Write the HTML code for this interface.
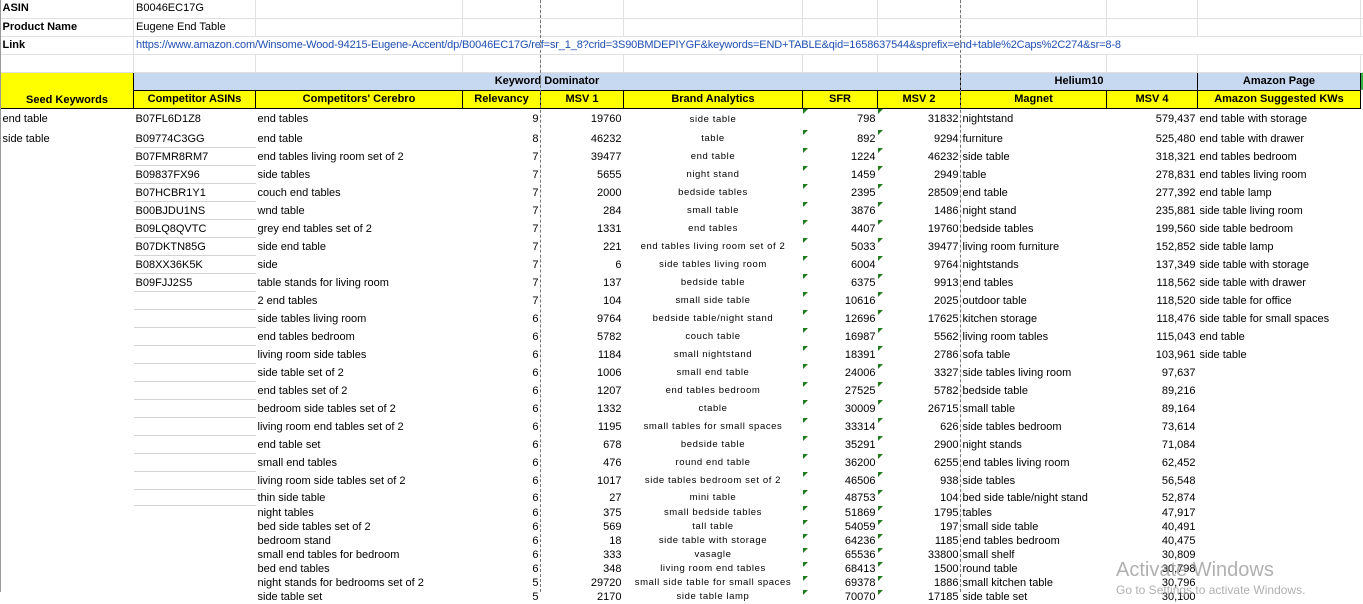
<!DOCTYPE html>
<html><head><meta charset="utf-8"><style>
body{margin:0;width:1363px;height:592px;overflow:hidden;background:#fff;font-family:"Liberation Sans",sans-serif;font-size:11px;color:#000;position:relative}
table{border-collapse:collapse;table-layout:fixed;position:absolute;left:0;top:0}
td{padding:0 2px;white-space:nowrap;overflow:hidden;height:18px;line-height:18px;box-sizing:border-box;border:0}
.t td{border-right:1px solid #e0e0e0;border-bottom:1px solid #e0e0e0;height:18px;line-height:17px}
.b{font-weight:bold}
.r{text-align:right}
.h td{height:18px;line-height:16px}
.y{background:#ffff00;font-weight:bold;text-align:center;border:1px solid #000 !important}
.bl{background:#c6d9f1;font-weight:bold;text-align:center;border:1px solid #000 !important}
.ba{font-size:9.5px;letter-spacing:0.6px;text-align:center}
.g{position:relative}
.g:before{content:"";position:absolute;left:0;top:0;border-top:5px solid #1e7b1e;border-right:5px solid transparent}
.cb{box-shadow:inset 0 -1px 0 #d4d4d4}
tr.f td{height:20px;line-height:21px;padding-top:0}
tr.s td{height:14px;line-height:14px}
tr.q td{height:16px;line-height:16px}
a{color:#1f4fb3;letter-spacing:-0.15px}
</style></head><body>
<table style="width:1363px">
<colgroup><col style="width:133px"><col style="width:122px"><col style="width:207px"><col style="width:78px"><col style="width:83px"><col style="width:179px"><col style="width:75px"><col style="width:83px"><col style="width:146px"><col style="width:91px"><col style="width:163px"><col style="width:3px"></colgroup>
<tbody class="t">
<tr><td class="b">ASIN</td><td>B0046EC17G</td><td></td><td></td><td></td><td></td><td></td><td></td><td></td><td></td><td></td><td></td></tr>
<tr><td class="b">Product Name</td><td>Eugene End Table</td><td></td><td></td><td></td><td></td><td></td><td></td><td></td><td></td><td></td><td></td></tr>
<tr><td class="b">Link</td><td colspan="11" style="overflow:visible"><a>https://www.amazon.com/Winsome-Wood-94215-Eugene-Accent/dp/B0046EC17G/ref=sr_1_8?crid=3S90BMDEPIYGF&amp;keywords=END+TABLE&amp;qid=1658637544&amp;sprefix=end+table%2Caps%2C274&amp;sr=8-8</a></td></tr>
<tr><td></td><td></td><td></td><td></td><td></td><td></td><td></td><td></td><td></td><td></td><td></td><td></td></tr>
</tbody>
<tbody class="h">
<tr><td class="y" rowspan="2" style="vertical-align:bottom">Seed Keywords</td><td class="bl" colspan="7">Keyword Dominator</td><td class="bl" colspan="2">Helium10</td><td class="bl">Amazon Page</td><td style="background:#2fb34a"></td></tr>
<tr><td class="y">Competitor ASINs</td><td class="y">Competitors' Cerebro</td><td class="y">Relevancy</td><td class="y">MSV 1</td><td class="y">Brand Analytics</td><td class="y">SFR</td><td class="y">MSV 2</td><td class="y">Magnet</td><td class="y">MSV 4</td><td class="y">Amazon Suggested KWs</td><td></td></tr>
</tbody>
<tbody>
<tr class="f"><td>end table</td><td>B07FL6D1Z8</td><td>end tables</td><td class="r">9</td><td class="r">19760</td><td class="ba">side table</td><td class="r g">798</td><td class="r g">31832</td><td>nightstand</td><td class="r">579,437</td><td>end table with storage</td><td></td></tr>
<tr><td>side table</td><td class="cb">B09774C3GG</td><td>end table</td><td class="r">8</td><td class="r">46232</td><td class="ba">table</td><td class="r g">892</td><td class="r g">9294</td><td>furniture</td><td class="r">525,480</td><td>end table with drawer</td><td></td></tr>
<tr><td></td><td class="cb">B07FMR8RM7</td><td>end tables living room set of 2</td><td class="r">7</td><td class="r">39477</td><td class="ba">end table</td><td class="r g">1224</td><td class="r g">46232</td><td>side table</td><td class="r">318,321</td><td>end tables bedroom</td><td></td></tr>
<tr><td></td><td class="cb">B09837FX96</td><td>side tables</td><td class="r">7</td><td class="r">5655</td><td class="ba">night stand</td><td class="r g">1459</td><td class="r g">2949</td><td>table</td><td class="r">278,831</td><td>end tables living room</td><td></td></tr>
<tr><td></td><td class="cb">B07HCBR1Y1</td><td>couch end tables</td><td class="r">7</td><td class="r">2000</td><td class="ba">bedside tables</td><td class="r g">2395</td><td class="r g">28509</td><td>end table</td><td class="r">277,392</td><td>end table lamp</td><td></td></tr>
<tr><td></td><td class="cb">B00BJDU1NS</td><td>wnd table</td><td class="r">7</td><td class="r">284</td><td class="ba">small table</td><td class="r g">3876</td><td class="r g">1486</td><td>night stand</td><td class="r">235,881</td><td>side table living room</td><td></td></tr>
<tr><td></td><td class="cb">B09LQ8QVTC</td><td>grey end tables set of 2</td><td class="r">7</td><td class="r">1331</td><td class="ba">end tables</td><td class="r g">4407</td><td class="r g">19760</td><td>bedside tables</td><td class="r">199,560</td><td>side table bedroom</td><td></td></tr>
<tr><td></td><td class="cb">B07DKTN85G</td><td>side end table</td><td class="r">7</td><td class="r">221</td><td class="ba">end tables living room set of 2</td><td class="r g">5033</td><td class="r g">39477</td><td>living room furniture</td><td class="r">152,852</td><td>side table lamp</td><td></td></tr>
<tr><td></td><td class="cb">B08XX36K5K</td><td>side</td><td class="r">7</td><td class="r">6</td><td class="ba">side tables living room</td><td class="r g">6004</td><td class="r g">9764</td><td>nightstands</td><td class="r">137,349</td><td>side table with storage</td><td></td></tr>
<tr><td></td><td class="cb">B09FJJ2S5</td><td>table stands for living room</td><td class="r">7</td><td class="r">137</td><td class="ba">bedside table</td><td class="r g">6375</td><td class="r g">9913</td><td>end tables</td><td class="r">118,562</td><td>side table with drawer</td><td></td></tr>
<tr><td></td><td class="cb"></td><td>2 end tables</td><td class="r">7</td><td class="r">104</td><td class="ba">small side table</td><td class="r g">10616</td><td class="r g">2025</td><td>outdoor table</td><td class="r">118,520</td><td>side table for office</td><td></td></tr>
<tr><td></td><td class="cb"></td><td>side tables living room</td><td class="r">6</td><td class="r">9764</td><td class="ba">bedside table/night stand</td><td class="r g">12696</td><td class="r g">17625</td><td>kitchen storage</td><td class="r">118,476</td><td>side table for small spaces</td><td></td></tr>
<tr><td></td><td class="cb"></td><td>end tables bedroom</td><td class="r">6</td><td class="r">5782</td><td class="ba">couch table</td><td class="r g">16987</td><td class="r g">5562</td><td>living room tables</td><td class="r">115,043</td><td>end table</td><td></td></tr>
<tr><td></td><td class="cb"></td><td>living room side tables</td><td class="r">6</td><td class="r">1184</td><td class="ba">small nightstand</td><td class="r g">18391</td><td class="r g">2786</td><td>sofa table</td><td class="r">103,961</td><td>side table</td><td></td></tr>
<tr><td></td><td class="cb"></td><td>side table set of 2</td><td class="r">6</td><td class="r">1006</td><td class="ba">small end table</td><td class="r g">24006</td><td class="r g">3327</td><td>side tables living room</td><td class="r">97,637</td><td></td><td></td></tr>
<tr><td></td><td class="cb"></td><td>end tables set of 2</td><td class="r">6</td><td class="r">1207</td><td class="ba">end tables bedroom</td><td class="r g">27525</td><td class="r g">5782</td><td>bedside table</td><td class="r">89,216</td><td></td><td></td></tr>
<tr><td></td><td class="cb"></td><td>bedroom side tables set of 2</td><td class="r">6</td><td class="r">1332</td><td class="ba">ctable</td><td class="r g">30009</td><td class="r g">26715</td><td>small table</td><td class="r">89,164</td><td></td><td></td></tr>
<tr><td></td><td class="cb"></td><td>living room end tables set of 2</td><td class="r">6</td><td class="r">1195</td><td class="ba">small tables for small spaces</td><td class="r g">33314</td><td class="r g">626</td><td>side tables bedroom</td><td class="r">73,614</td><td></td><td></td></tr>
<tr><td></td><td class="cb"></td><td>end table set</td><td class="r">6</td><td class="r">678</td><td class="ba">bedside table</td><td class="r g">35291</td><td class="r g">2900</td><td>night stands</td><td class="r">71,084</td><td></td><td></td></tr>
<tr><td></td><td class="cb"></td><td>small end tables</td><td class="r">6</td><td class="r">476</td><td class="ba">round end table</td><td class="r g">36200</td><td class="r g">6255</td><td>end tables living room</td><td class="r">62,452</td><td></td><td></td></tr>
<tr><td></td><td class="cb"></td><td>living room side tables set of 2</td><td class="r">6</td><td class="r">1017</td><td class="ba">side tables bedroom set of 2</td><td class="r g">46506</td><td class="r g">938</td><td>side tables</td><td class="r">56,548</td><td></td><td></td></tr>
<tr class="q"><td></td><td class="cb"></td><td>thin side table</td><td class="r">6</td><td class="r">27</td><td class="ba">mini table</td><td class="r g">48753</td><td class="r g">104</td><td>bed side table/night stand</td><td class="r">52,874</td><td></td><td></td></tr>
<tr class="s"><td></td><td></td><td>night tables</td><td class="r">6</td><td class="r">375</td><td class="ba">small bedside tables</td><td class="r g">51869</td><td class="r g">1795</td><td>tables</td><td class="r">47,917</td><td></td><td></td></tr>
<tr class="s"><td></td><td></td><td>bed side tables set of 2</td><td class="r">6</td><td class="r">569</td><td class="ba">tall table</td><td class="r g">54059</td><td class="r g">197</td><td>small side table</td><td class="r">40,491</td><td></td><td></td></tr>
<tr class="s"><td></td><td></td><td>bedroom stand</td><td class="r">6</td><td class="r">18</td><td class="ba">side table with storage</td><td class="r g">64236</td><td class="r g">1185</td><td>end tables bedroom</td><td class="r">40,475</td><td></td><td></td></tr>
<tr class="s"><td></td><td></td><td>small end tables for bedroom</td><td class="r">6</td><td class="r">333</td><td class="ba">vasagle</td><td class="r g">65536</td><td class="r g">33800</td><td>small shelf</td><td class="r">30,809</td><td></td><td></td></tr>
<tr class="s"><td></td><td></td><td>bed end tables</td><td class="r">6</td><td class="r">348</td><td class="ba">living room end tables</td><td class="r g">68413</td><td class="r g">1500</td><td>round table</td><td class="r">30,798</td><td></td><td></td></tr>
<tr class="s"><td></td><td></td><td>night stands for bedrooms set of 2</td><td class="r">5</td><td class="r">29720</td><td class="ba">small side table for small spaces</td><td class="r g">69378</td><td class="r g">1886</td><td>small kitchen table</td><td class="r">30,796</td><td></td><td></td></tr>
<tr class="s"><td></td><td></td><td>side table set</td><td class="r">5</td><td class="r">2170</td><td class="ba">side table lamp</td><td class="r g">70070</td><td class="r g">17185</td><td>side table set</td><td class="r">30,100</td><td></td><td></td></tr>
</tbody></table>
<div style="position:absolute;left:0;top:0;height:592px;border-left:1px solid #999"></div>
<div style="position:absolute;left:540px;top:0;height:592px;border-left:1px dashed #777"></div>
<div style="position:absolute;left:960px;top:0;height:592px;border-left:1px dashed #777"></div>
<div style="position:absolute;left:1116px;top:559px;font-size:20px;color:rgba(150,150,150,0.75)">Activate Windows</div>
<div style="position:absolute;left:1116px;top:583px;font-size:12px;color:rgba(150,150,150,0.75)">Go to Settings to activate Windows.</div>
</body></html>
